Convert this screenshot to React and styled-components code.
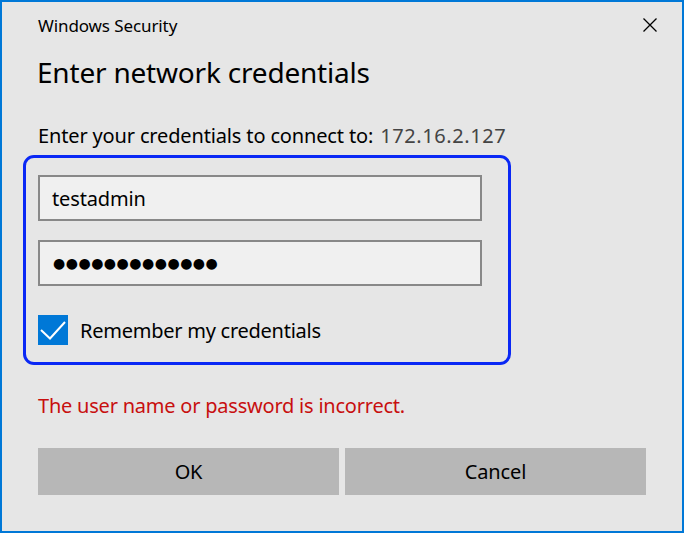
import React from 'react';
import styled, {createGlobalStyle} from 'styled-components';

const GlobalStyle = createGlobalStyle`
    html, body {
        margin: 0;
        padding: 0;
        background: #e6e6e6;
    }
    * {
        box-sizing: border-box;
    }`

const Window = styled.div`
    width: 684px;
    height: 533px;
    background-color: #e6e6e6;
    border: 2px solid #0078d7;
    padding: 0 0 0 36px;
    display: flex;
    flex-direction: column;
    font-family: 'Noto Sans', 'Open Sans', sans-serif;
    color: #000;`

const TitleBar = styled.div`
    height: 46px;
    display: flex;
    align-items: center;
    justify-content: space-between;
    padding-right: 25px;`

const Title = styled.span`
    font-size: 17px;
    letter-spacing: -0.1px;`

const CloseButton = styled.button`
    width: 14px;
    height: 14px;
    padding: 0;
    border: 0;
    background: none;
    display: flex;
    cursor: pointer;`

const Heading = styled.h1`
    margin: 6px 0 0 -1px;
    height: 36px;
    line-height: 36px;
    font-size: 28px;
    font-weight: 400;
    letter-spacing: -0.2px;`

const Prompt = styled.p`
    margin: 32px 0 0 0;
    height: 28px;
    line-height: 28px;
    font-size: 20px;
    letter-spacing: -0.15px;`

const Host = styled.span`
    color: #444;
    margin-left: 7px;
    letter-spacing: 0.6px;`

const Highlight = styled.div`
    margin: 5px 0 0 -15px;
    width: 488px;
    border: 3px solid #0a28f5;
    border-radius: 11px;
    padding: 17px 26px 17px 12px;
    display: flex;
    flex-direction: column;`

const Field = styled.div`
    height: 46px;
    width: 444px;
    margin-top: ${props => props.gap || 0}px;
    background-color: #f0f0f0;
    border: 2px solid #888;
    display: flex;
    align-items: center;
    padding-left: 12px;
    font-size: 20px;
    letter-spacing: -0.15px;`

const Dots = styled.span`
    font-family: 'DejaVu Sans', sans-serif;
    font-size: 14px;
    letter-spacing: 0.5px;
    padding-left: 1px;`

const CheckRow = styled.label`
    margin-top: 29px;
    height: 30px;
    display: flex;
    align-items: center;
    gap: 12px;
    font-size: 20px;
    letter-spacing: -0.25px;`

const CheckBox = styled.span`
    width: 30px;
    height: 30px;
    background-color: #0078d7;
    display: flex;`

const ErrorText = styled.p`
    margin: 27px 0 0 0;
    height: 28px;
    line-height: 28px;
    font-size: 20px;
    color: #c80f0f;
    letter-spacing: -0.22px;`

const Buttons = styled.div`
    margin-top: 28px;
    width: 608px;
    display: grid;
    grid-template-columns: 1fr 1fr;
    gap: 6px;`

const Button = styled.button`
    height: 47px;
    border: 0;
    background-color: #b7b7b7;
    font-family: 'Noto Sans', 'Open Sans', sans-serif;
    font-size: 20px;
    color: #000;
    letter-spacing: -0.15px;
    cursor: pointer;`

const App = () => {
    const password = '\u25CF'.repeat(13);

    return (
        <Window>
            <GlobalStyle />
            <TitleBar>
                <Title>Windows Security</Title>
                <CloseButton aria-label='Close'>
                    <svg width='14' height='14' viewBox='0 0 14 14'>
                        <path d='M0.5 0.5 L13.5 13.5 M13.5 0.5 L0.5 13.5' stroke='#000' strokeWidth='1.3' fill='none' />
                    </svg>
                </CloseButton>
            </TitleBar>
            <Heading>Enter network credentials</Heading>
            <Prompt>Enter your credentials to connect to:<Host>172.16.2.127</Host></Prompt>
            <Highlight>
                <Field>testadmin</Field>
                <Field gap={19}><Dots>{password}</Dots></Field>
                <CheckRow>
                    <CheckBox>
                        <svg width='30' height='30' viewBox='0 0 30 30'>
                            <path d='M3 15 L12 23.5 L27 7' stroke='#fff' strokeWidth='2' fill='none' />
                        </svg>
                    </CheckBox>
                    Remember my credentials
                </CheckRow>
            </Highlight>
            <ErrorText>The user name or password is incorrect.</ErrorText>
            <Buttons>
                <Button>OK</Button>
                <Button>Cancel</Button>
            </Buttons>
        </Window>
    );
}

export default App;
